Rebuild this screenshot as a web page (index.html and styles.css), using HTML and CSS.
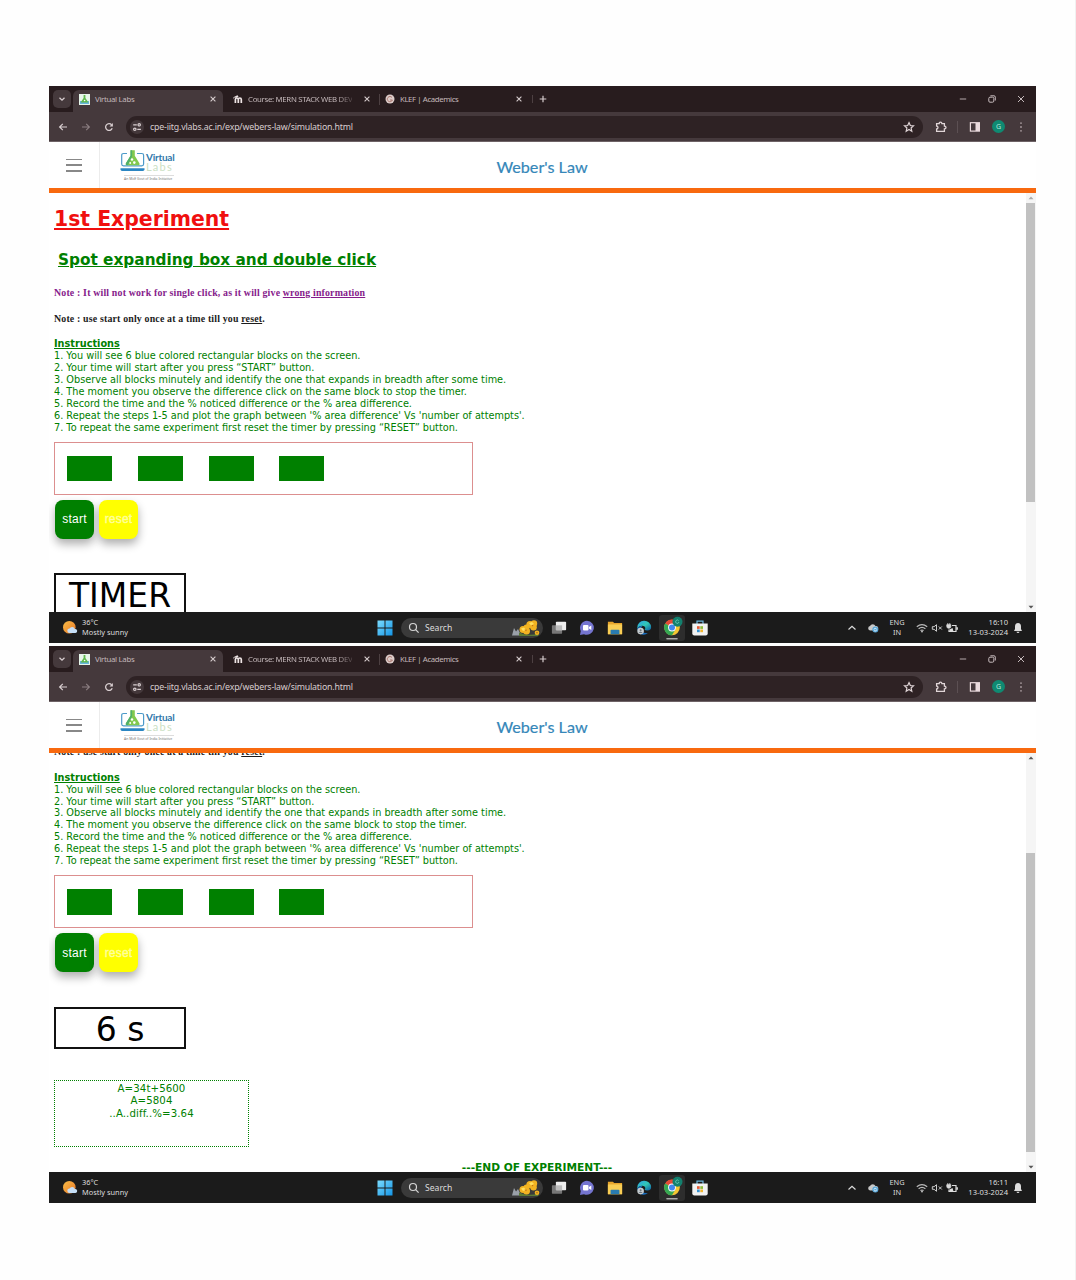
FILE: index.html
```html
<!DOCTYPE html>
<html lang="en">
<head>
<meta charset="utf-8">
<title>Weber's Law - Virtual Labs</title>
<link rel="stylesheet" href="styles.css">
</head>
<body>
<svg class="defs" width="0" height="0" aria-hidden="true">
  <defs>
    <linearGradient id="gwin" x2="1" y2="1"><stop offset="0" stop-color="#7bdcff"/><stop offset="1" stop-color="#1495e6"/></linearGradient>
    <linearGradient id="gsun" x2="1" y2="1"><stop offset="0" stop-color="#f8bd45"/><stop offset="1" stop-color="#e9762a"/></linearGradient>
    <linearGradient id="gedge" x2="1" y2="1"><stop offset="0" stop-color="#2b9fe8"/><stop offset=".5" stop-color="#31c8b6"/><stop offset="1" stop-color="#0c59a4"/></linearGradient>
  </defs>
  <symbol id="chev" viewBox="0 0 8 8"><path d="M1.5 2.8 4 5.2 6.5 2.8" fill="none" stroke="#d8ced0" stroke-width="1.3"/></symbol>
  <symbol id="x" viewBox="0 0 8 8"><path d="M1.6 1.6l4.8 4.8M6.4 1.6 1.6 6.4" stroke="#d6cccd" stroke-width="1.1"/></symbol>
  <symbol id="plus" viewBox="0 0 8 8"><path d="M4 .7v6.6M.7 4h6.6" stroke="#d6cccd" stroke-width="1.2"/></symbol>
  <symbol id="fav" viewBox="0 0 11 11"><rect width="11" height="11" fill="#e6f5ea"/><rect x="1" y="7" width="9" height="3" fill="#68b5dc"/><path d="M4.6 1h1.8v3l3 4.6H1.6l3-4.6z" fill="#5fb84e"/><circle cx="5.6" cy="6.5" r=".8" fill="#fff"/></symbol>
  <symbol id="moodle" viewBox="0 0 10 10"><path d="M2.4 9V5.400Q2.400 4 3.800 4T5.300 5.400V9M5.300 5.400Q5.300 4 6.800 4T8.300 5.400V9" fill="none" stroke="#eee4e4" stroke-width="1.700"/><path d="M.4 3.200 4.400 1.300l1.200 1.100-2 1.300-2.400-.2-.3 2z" fill="#eee4e4"/></symbol>
  <symbol id="klef" viewBox="0 0 10 10"><circle cx="5" cy="5" r="4.500" fill="#ddcdca"/><path d="M7 3.500A2.600 2.600 0 1 0 7.400 6H5" fill="none" stroke="#a8766e" stroke-width="1"/></symbol>
  <symbol id="min" viewBox="0 0 10 10"><path d="M1.8 5h6.400" stroke="#b5a9ab"/></symbol>
  <symbol id="max" viewBox="0 0 10 10"><rect x="1.800" y="3.200" width="5" height="5" rx="1.200" fill="none" stroke="#c5babc"/><path d="M3.400 1.800H7Q8.300 1.800 8.300 3.100v3.400" fill="none" stroke="#c5babc"/></symbol>
  <symbol id="close" viewBox="0 0 10 10"><path d="m2 2 6 6M8 2 2 8" stroke="#c5babc"/></symbol>
  <symbol id="back" viewBox="0 0 10 10"><path d="M9 5H1.800M4.800 1.800 1.600 5l3.200 3.200" fill="none" stroke="#d9cfd1" stroke-width="1.200"/></symbol>
  <symbol id="fwd" viewBox="0 0 10 10"><path d="M1 5h7.200M5.200 1.800 8.400 5 5.200 8.200" fill="none" stroke="#8c7f82" stroke-width="1.100"/></symbol>
  <symbol id="reload" viewBox="0 0 10 10"><path d="M8.200 6.300A3.400 3.400 0 1 1 7.600 2.800" fill="none" stroke="#d9cfd1" stroke-width="1.300"/><path d="M8.900 1v3.400H5.500z" fill="#d9cfd1"/></symbol>
  <symbol id="site" viewBox="0 0 14 14"><circle cx="7" cy="7" r="7" fill="#44383b"/><path d="M6.800 4.800H3.200M7.300 9.300h3.600" stroke="#d9cfd1" stroke-width="1.300"/><circle cx="9.200" cy="4.800" r="1.200" fill="none" stroke="#d9cfd1" stroke-width="1.200"/><circle cx="4.800" cy="9.300" r="1.200" fill="none" stroke="#d9cfd1" stroke-width="1.200"/></symbol>
  <symbol id="star" viewBox="0 0 12 12"><path d="m6 1.600 1.300 2.900 3.200.3L8.100 7l.7 3.200L6 8.500l-2.800 1.700L3.900 7 1.500 4.800l3.200-.3z" fill="none" stroke="#e0d5d7" stroke-width="1.200"/></symbol>
  <symbol id="ext" viewBox="0 0 12 12"><path d="M1.600 2.600h2.600q0-1.500 1.300-1.500t1.400 1.500h2.500v2.600q1.600 0 1.600 1.300T9.400 7.900v2.500H1.600V8Q3 7.800 3 6.500T1.600 5z" fill="none" stroke="#e0d5d7" stroke-width="1.300"/></symbol>
  <symbol id="panel" viewBox="0 0 12 12"><rect x="1.400" y="1.700" width="9" height="8.400" fill="none" stroke="#eadadd" stroke-width="1.200"/><rect x="6.500" y="2" width="4" height="8" fill="#eadadd"/></symbol>
  <symbol id="dots" viewBox="0 0 4 12"><path d="M1.300 1.400h1.400v1.400H1.300zm0 3.900h1.400v1.400H1.300zm0 3.900h1.400v1.400H1.300z" fill="#c6babd"/></symbol>
  <symbol id="laptop" viewBox="0 0 26 22"><path d="M7 3.500H3.500Q1.700 3.500 1.700 5.300V14q0 1.800 1.800 1.800h18.300q1.800 0 1.800-1.800V5.300q0-1.800-1.800-1.800H17" fill="none" stroke="#4c9ac9" stroke-width="1.200"/><path d="M.5 18.200h24v1q0 1.800-1.600 1.800H2Q.5 21 .5 19.200z" fill="#2b86c2"/><path d="M10.500.3h4.300v5.500l4.600 7.500q.7 2-1.400 2H7.300q-2.100 0-1.400-2l4.600-7.500z" fill="#82c94f"/><path d="M10.500.3h1.600v6L7.700 15.300q-2.500 0-1.800-2l4.600-7.500z" fill="#4fb06b"/><circle cx="12" cy="9.500" r="1.200" fill="#fff"/><circle cx="14.300" cy="12.600" r="1.300" fill="#fff"/><circle cx="10.200" cy="13" r=".9" fill="#fff"/></symbol>
  <symbol id="sun" viewBox="0 0 16 16"><circle cx="7.300" cy="7.300" r="6.300" fill="url(#gsun)"/><path d="M7.500 13a2.200 2.200 0 0 1 0-4.400 3 3 0 0 1 5.400.4 2 2 0 0 1 .6 4z" fill="#c5def6"/></symbol>
  <symbol id="win" viewBox="0 0 16 16"><path d="M.5.5h7v7h-7zM8.500.5h7v7h-7zM.5 8.500h7v7h-7zM8.500 8.500h7v7h-7z" fill="url(#gwin)"/></symbol>
  <symbol id="mag" viewBox="0 0 12 12"><circle cx="5" cy="5" r="3.500" fill="none" stroke="#d5d5d5" stroke-width="1.200"/><path d="m7.600 7.600 3 3" stroke="#d5d5d5" stroke-width="1.300"/></symbol>
  <symbol id="flower" viewBox="0 0 30 18"><path d="M1 16.500 3 9l2 3.500L7 10l2 4 4 2.500z" fill="#9aa0a8"/><path d="M8 13.500q8 4 20 1l-1 2.500H8z" fill="#5b7a35"/><g fill="#f2b322"><circle cx="12" cy="10.500" r="3.500"/><circle cx="15.500" cy="8.500" r="3"/><circle cx="15.500" cy="12" r="3.500"/><circle cx="19" cy="5.500" r="3.600"/><circle cx="23" cy="4.500" r="3.200"/><circle cx="22.500" cy="8.300" r="3.300"/><circle cx="26" cy="13.700" r="2.300"/></g><path d="m10 9.500 3-1 2 2.500-3 1zM18 4l3-1 2 2-3 1.500z" fill="#ffdf5e"/><path d="m13.500 10.500 2.500.2-1 1.500zM20.500 6l2 .3-1 1.300z" fill="#c46b12"/><circle cx="26" cy="13.700" r=".8" fill="#a76118"/></symbol>
  <symbol id="tasks" viewBox="0 0 18 18"><rect x="1" y="6" width="11.500" height="9.500" rx=".8" fill="#777"/><rect x="5.500" y="2" width="11.500" height="9.500" rx=".8" fill="#eee"/><path d="M5.500 6h7v5.500h-7z" fill="#bcbcbc"/></symbol>
  <symbol id="chat" viewBox="0 0 16 16"><path d="M8 .8A7 7 0 1 1 5 14.200L1 15l.8-4A7 7 0 0 1 8 .8z" fill="#7474cf"/><rect x="4" y="5" width="5.500" height="5.600" rx="1" fill="#fff"/><path d="m10 7 2.300-1.500v4.600L10 8.600z" fill="#fff"/></symbol>
  <symbol id="folder" viewBox="0 0 18 16"><path d="M1 1h5.500L8.200 2.500H17v12.500H1z" fill="#e7a52c"/><path d="M1 4h16v11H1z" fill="#f9ce55"/><path d="M4 11q0-1 1-1h8q1 0 1 1v4H4z" fill="#297bb1"/></symbol>
  <symbol id="edge" viewBox="0 0 18 16"><path d="M1.500 7.500A7.700 7.300 0 0 1 17 7q.3 3.800-4.300 3.800-2.700 0-3-1 .9-.8.8-2.200Q10 5.500 7 5.500 3 5.500 1.500 9z" fill="url(#gedge)"/><path d="M7.500 5.600Q5.500 7 5.800 10q.8 4 7.500 4Q10 16.500 6 15 1.500 13 1.500 8.500 3.500 5.400 7.500 5.600z" fill="#186dbc"/><circle cx="5.200" cy="11.500" r="3.700" fill="#c6ccd0"/><circle cx="5.200" cy="10.500" r="1.100" fill="#6c7781"/><path d="M3 13.500q2.200-2.300 4.400 0z" fill="#6c7781"/></symbol>
  <symbol id="chrome" viewBox="0 0 26 26"><rect width="26" height="26" rx="3" fill="#2d2d2d"/><circle cx="13" cy="12.500" r="7.800" fill="#f5c633"/><path d="M13 12.500 6.200 8.600A7.800 7.800 0 0 1 19.800 8.600z" fill="#e64a38"/><path d="M6.200 8.600A7.800 7.800 0 0 0 13 20.300l3.400-5.800-3.400-2z" fill="#36a853"/><circle cx="13" cy="12.500" r="3.900" fill="#fff"/><circle cx="13" cy="12.500" r="3" fill="#4388ef"/><circle cx="18.500" cy="6.700" r="5" fill="#13806e"/><path d="M19.700 5.700a1.700 1.700 0 1 0 .2 1.700h-1" fill="none" stroke="#65c6b4" stroke-width=".9"/><path d="M8 23.800h10" stroke="#aaa" stroke-width="1.600" stroke-linecap="round"/></symbol>
  <symbol id="store" viewBox="0 0 16 16"><path d="M5 4V1.200h6V4" fill="none" stroke="#6eb7df" stroke-width="1.200"/><path d="M.3 3.500h15.400v10q0 2-2 2H2.300q-2 0-2-2z" fill="#f2f2f2"/><path d="M5 6.200h2.700v2.700H5z" fill="#e55b36"/><path d="M8.300 6.200H11v2.700H8.300z" fill="#8dba37"/><path d="M5 9.500h2.700v2.700H5z" fill="#3793d1"/><path d="M8.300 9.500H11v2.700H8.300z" fill="#f2b52e"/></symbol>
  <symbol id="up" viewBox="0 0 10 10"><path d="M1.500 6.500 5 3.300l3.500 3.200" fill="none" stroke="#ddd" stroke-width="1.200"/></symbol>
  <symbol id="cloud" viewBox="0 0 12 10"><path d="M3 7.500a2.300 2.300 0 0 1 0-4.500 3 3 0 0 1 5.500 0 2 2 0 0 1 1 4.500z" fill="#c8c8c8"/><circle cx="8.300" cy="6.500" r="3" fill="#5ba8d9"/><path d="M6.900 6.500a1.500 1.500 0 0 1 2.700-.5M9.700 6.700A1.500 1.500 0 0 1 7 7.300" stroke="#fff" fill="none" stroke-width=".8"/></symbol>
  <symbol id="wifi" viewBox="0 0 12 10"><path d="M.8 3.800q5.200-4.300 10.400 0M2.600 5.800q3.400-2.700 6.800 0M4.400 7.600q1.600-1.200 3.200 0" fill="none" stroke="#bbb" stroke-width="1.200"/><circle cx="6" cy="8.500" r=".9" fill="#ccc"/></symbol>
  <symbol id="vol" viewBox="0 0 12 10"><path d="M1.300 3.700h1.800l2.400-2v6.600l-2.400-2H1.300z" fill="none" stroke="#ccc"/><path d="m7.800 3.500 3 3m0-3-3 3" stroke="#ccc"/></symbol>
  <symbol id="batt" viewBox="0 0 12 12"><path d="M6 3.500h4v6H3V7.500M11.300 5.300v2.400" fill="none" stroke="#ddd" stroke-width="1.200"/><path d="M.8 2.700h4v1.800q0 1.800-2 1.800t-2-1.800zM1.800 1v2M3.800 1v2" fill="#ddd" stroke="#ddd" stroke-width=".8"/><path d="M3.500 9.500V7.500l3-1.500 1 3.500z" fill="#ddd"/></symbol>
  <symbol id="bell" viewBox="0 0 10 12"><path d="M5 1q3 .2 3 3.500V7l1 2H1l1-2V4.500Q2 1.200 5 1zM3.500 9.700h3Q6.300 11 5 11T3.500 9.700z" fill="#ddd"/></symbol>
  <symbol id="sup" viewBox="0 0 10 8"><path d="m2.500 5.200 2.500-2.700 2.500 2.700z" fill="currentColor"/></symbol>
</svg>

<main class="page">
<section class="screen">
  <div class="tabs">
    <span class="tabmenu"><svg class="i8"><use href="#chev"/></svg></span>
    <div class="tab active"><svg class="i11"><use href="#fav"/></svg><span class="label">Virtual Labs</span><svg class="i8"><use href="#x"/></svg></div>
    <div class="tab second"><svg class="i10"><use href="#moodle"/></svg><span class="label fade">Course: MERN STACK WEB DEV</span><svg class="i8"><use href="#x"/></svg></div>
    <div class="tab third"><svg class="i10"><use href="#klef"/></svg><span class="label">KLEF | Academics</span><svg class="i8"><use href="#x"/></svg></div>
    <span class="newtab"><svg class="i8"><use href="#plus"/></svg></span>
    <div class="winctl"><svg class="i10"><use href="#min"/></svg><svg class="i10"><use href="#max"/></svg><svg class="i10"><use href="#close"/></svg></div>
  </div>
  <div class="toolbar">
    <div class="nav"><svg class="i10"><use href="#back"/></svg><svg class="i10"><use href="#fwd"/></svg><svg class="i10"><use href="#reload"/></svg></div>
    <div class="url"><svg class="i14"><use href="#site"/></svg><span class="address">cpe-iitg.vlabs.ac.in/exp/webers-law/simulation.html</span><svg class="i12"><use href="#star"/></svg></div>
    <div class="tools"><svg class="i12"><use href="#ext"/></svg><span class="rule"></span><svg class="i12"><use href="#panel"/></svg><span class="avatar">G</span><svg class="dots"><use href="#dots"/></svg></div>
  </div>
  <header class="header">
    <div class="burger"><span></span><span></span><span></span></div>
    <div class="logo">
      <div class="mark"><svg class="laptop"><use href="#laptop"/></svg><div class="brand"><span class="virtual">Virtual</span><span class="labs">Labs</span></div></div>
      <span class="tagline">An MoE Govt of India Initiative</span>
    </div>
    <div class="title">Weber's Law</div>
  </header>
  <div class="view">
    <div class="doc">
      <h1>1st Experiment</h1>
      <h2>Spot expanding box and double click</h2>
      <p class="note purple">Note : It will not work for single click, as it will give <u>wrong information</u></p>
      <p class="note second-note">Note : use start only once at a time till you <u>reset</u>.</p>
      <div class="instructions">
        <p class="heading">Instructions</p>
        <p>1. You will see 6 blue colored rectangular blocks on the screen.</p>
        <p>2. Your time will start after you press “START” button.</p>
        <p>3. Observe all blocks minutely and identify the one that expands in breadth after some time.</p>
        <p>4. The moment you observe the difference click on the same block to stop the timer.</p>
        <p>5. Record the time and the % noticed difference or the % area difference.</p>
        <p>6. Repeat the steps 1-5 and plot the graph between '% area difference' Vs 'number of attempts'.</p>
        <p>7. To repeat the same experiment first reset the timer by pressing “RESET” button.</p>
      </div>
      <div class="blocks"><i></i><i></i><i></i><i></i></div>
      <div class="buttons"><button class="start">start</button><button class="reset">reset</button></div>
      <div class="timer">TIMER</div>
    </div>
    <div class="scrollbar"><svg class="arrow dim"><use href="#sup"/></svg><span class="thumb top"></span><svg class="arrow down"><use href="#sup"/></svg></div>
  </div>
  <footer class="taskbar">
    <svg class="sun"><use href="#sun"/></svg>
    <div class="weather"><span>36°C</span><span>Mostly sunny</span></div>
    <svg class="win"><use href="#win"/></svg>
    <div class="search"><svg class="i12"><use href="#mag"/></svg><span>Search</span><svg class="flower"><use href="#flower"/></svg></div>
    <div class="apps"><svg><use href="#tasks"/></svg><svg><use href="#chat"/></svg><svg><use href="#folder"/></svg><svg><use href="#edge"/></svg><svg class="big"><use href="#chrome"/></svg><svg><use href="#store"/></svg></div>
    <div class="tray">
      <svg class="up"><use href="#up"/></svg><svg class="cloud"><use href="#cloud"/></svg>
      <div class="lang"><span>ENG</span><span>IN</span></div>
      <div class="status"><svg><use href="#wifi"/></svg><svg><use href="#vol"/></svg><svg><use href="#batt"/></svg></div>
      <div class="clock"><span>16:10</span><span>13-03-2024</span></div>
      <svg class="bell"><use href="#bell"/></svg>
    </div>
  </footer>
</section>

<section class="screen">
  <div class="tabs">
    <span class="tabmenu"><svg class="i8"><use href="#chev"/></svg></span>
    <div class="tab active"><svg class="i11"><use href="#fav"/></svg><span class="label">Virtual Labs</span><svg class="i8"><use href="#x"/></svg></div>
    <div class="tab second"><svg class="i10"><use href="#moodle"/></svg><span class="label fade">Course: MERN STACK WEB DEV</span><svg class="i8"><use href="#x"/></svg></div>
    <div class="tab third"><svg class="i10"><use href="#klef"/></svg><span class="label">KLEF | Academics</span><svg class="i8"><use href="#x"/></svg></div>
    <span class="newtab"><svg class="i8"><use href="#plus"/></svg></span>
    <div class="winctl"><svg class="i10"><use href="#min"/></svg><svg class="i10"><use href="#max"/></svg><svg class="i10"><use href="#close"/></svg></div>
  </div>
  <div class="toolbar">
    <div class="nav"><svg class="i10"><use href="#back"/></svg><svg class="i10"><use href="#fwd"/></svg><svg class="i10"><use href="#reload"/></svg></div>
    <div class="url"><svg class="i14"><use href="#site"/></svg><span class="address">cpe-iitg.vlabs.ac.in/exp/webers-law/simulation.html</span><svg class="i12"><use href="#star"/></svg></div>
    <div class="tools"><svg class="i12"><use href="#ext"/></svg><span class="rule"></span><svg class="i12"><use href="#panel"/></svg><span class="avatar">G</span><svg class="dots"><use href="#dots"/></svg></div>
  </div>
  <header class="header">
    <div class="burger"><span></span><span></span><span></span></div>
    <div class="logo">
      <div class="mark"><svg class="laptop"><use href="#laptop"/></svg><div class="brand"><span class="virtual">Virtual</span><span class="labs">Labs</span></div></div>
      <span class="tagline">An MoE Govt of India Initiative</span>
    </div>
    <div class="title">Weber's Law</div>
  </header>
  <div class="view">
    <div class="doc scrolled">
      <p class="note">Note : use start only once at a time till you <u>reset</u>.</p>
      <div class="instructions">
        <p class="heading">Instructions</p>
        <p>1. You will see 6 blue colored rectangular blocks on the screen.</p>
        <p>2. Your time will start after you press “START” button.</p>
        <p>3. Observe all blocks minutely and identify the one that expands in breadth after some time.</p>
        <p>4. The moment you observe the difference click on the same block to stop the timer.</p>
        <p>5. Record the time and the % noticed difference or the % area difference.</p>
        <p>6. Repeat the steps 1-5 and plot the graph between '% area difference' Vs 'number of attempts'.</p>
        <p>7. To repeat the same experiment first reset the timer by pressing “RESET” button.</p>
      </div>
      <div class="blocks"><i></i><i></i><i></i><i></i></div>
      <div class="buttons"><button class="start">start</button><button class="reset">reset</button></div>
      <div class="timer">6 s</div>
      <div class="result"><span>A=34t+5600</span><span>A=5804</span><span>..A..diff..%=3.64</span></div>
      <p class="end">---END OF EXPERIMENT---</p>
    </div>
    <div class="scrollbar"><svg class="arrow"><use href="#sup"/></svg><span class="thumb bottom"></span><svg class="arrow down"><use href="#sup"/></svg></div>
  </div>
  <footer class="taskbar">
    <svg class="sun"><use href="#sun"/></svg>
    <div class="weather"><span>36°C</span><span>Mostly sunny</span></div>
    <svg class="win"><use href="#win"/></svg>
    <div class="search"><svg class="i12"><use href="#mag"/></svg><span>Search</span><svg class="flower"><use href="#flower"/></svg></div>
    <div class="apps"><svg><use href="#tasks"/></svg><svg><use href="#chat"/></svg><svg><use href="#folder"/></svg><svg><use href="#edge"/></svg><svg class="big"><use href="#chrome"/></svg><svg><use href="#store"/></svg></div>
    <div class="tray">
      <svg class="up"><use href="#up"/></svg><svg class="cloud"><use href="#cloud"/></svg>
      <div class="lang"><span>ENG</span><span>IN</span></div>
      <div class="status"><svg><use href="#wifi"/></svg><svg><use href="#vol"/></svg><svg><use href="#batt"/></svg></div>
      <div class="clock"><span>16:11</span><span>13-03-2024</span></div>
      <svg class="bell"><use href="#bell"/></svg>
    </div>
  </footer>
</section>
</main>
</body>
</html>
```

FILE: styles.css
```css
* { box-sizing: border-box; }
body { margin: 0; background: #fefefe; }
p, h1, h2 { margin: 0; }
svg { display: block; flex: none; }
.defs { height: 0; }

.page {
  height: 1280px;
  padding: 86px 0 0 49px;
  display: flex;
  flex-direction: column;
  gap: 3px;
  border-right: 1px solid #f1f1f1;
  overflow: hidden;
}
.screen {
  width: 987px;
  height: 557px;
  display: flex;
  flex-direction: column;
  flex: none;
  background: #fff;
  font-family: "Noto Sans", "Open Sans", sans-serif;
  overflow: hidden;
}
.i8 { width: 8px; height: 8px; }
.i10 { width: 10px; height: 10px; }
.i11 { width: 11px; height: 11px; }
.i12 { width: 12px; height: 12px; }
.i14 { width: 14px; height: 14px; }

/* browser tab strip */
.tabs {
  height: 26px;
  display: flex;
  align-items: center;
  background: #281c1e;
  color: #c4b8ba;
  font-size: 7.8px;
  letter-spacing: -0.3px;
  line-height: 12px;
  white-space: nowrap;
}
.tabmenu {
  width: 18px;
  height: 18px;
  margin-left: 4px;
  display: grid;
  place-items: center;
  background: #45393c;
  border-radius: 5px;
}
.tab { display: flex; align-items: center; height: 26px; }
.tab .label { margin: 0 auto 0 5px; }
.tab.active {
  width: 150px;
  margin: 4px 0 0 2px;
  height: 22px;
  padding: 0 6px 4px;
  background: #45393c;
  border-radius: 6px 6px 0 0;
}
.tab.second { width: 156px; padding: 0 8px 0 10px; }
.tab.third { width: 153px; padding: 0 9px 0 6px; }
.tab.third .label { letter-spacing: -0.4px; }
.tab.third, .newtab {
  background: linear-gradient(#4d4042, #4d4042) left center / 1px 11px no-repeat;
}
.newtab { padding-left: 7px; }
.fade {
  -webkit-mask-image: linear-gradient(90deg, #000 85%, rgba(0, 0, 0, .25));
  mask-image: linear-gradient(90deg, #000 85%, rgba(0, 0, 0, .25));
}
.winctl { margin-left: auto; padding-right: 10px; display: flex; gap: 19px; }

/* address bar */
.toolbar {
  height: 30px;
  display: flex;
  align-items: center;
  background: #45393c;
  border-bottom: 1px solid #6e6366;
}
.nav { width: 77px; padding-left: 9px; display: flex; gap: 13px; }
.url {
  width: 797px;
  height: 22px;
  padding: 0 8px 0 4px;
  display: flex;
  align-items: center;
  background: #2e2224;
  border-radius: 11px;
}
.address { margin: 0 auto 0 6px; font-size: 8.8px; letter-spacing: -0.19px; color: #d8cdcf; white-space: nowrap; }
.tools { margin-left: 12px; display: flex; align-items: center; }
.rule { width: 1px; height: 12px; margin: 0 11px 0 10px; background: #5c5053; }
.avatar {
  width: 13px;
  height: 13px;
  margin: 0 14px 0 11px;
  border-radius: 50%;
  background: #0f8a72;
  color: #b9e6dc;
  font-size: 7px;
  line-height: 13px;
  text-align: center;
}
.dots { width: 4px; height: 12px; }

/* lab site header */
.header {
  height: 51px;
  display: grid;
  grid-template-columns: 51px 130px 624px 1fr;
  grid-template-rows: 46px;
  border-bottom: 5px solid #f8690f;
}
.burger {
  padding: 16.5px 0 0 17px;
  display: flex;
  flex-direction: column;
  gap: 4px;
  border-right: 1px solid #ececec;
}
.burger span { width: 16px; height: 1.7px; background: #888; }
.logo { padding: 8px 0 0 20px; display: flex; flex-direction: column; }
.mark { display: flex; height: 22px; }
.laptop { width: 26px; height: 22px; }
.brand { padding-top: 2px; display: flex; flex-direction: column; font-family: "Lato", sans-serif; line-height: 10px; }
.virtual { font-size: 10px; font-weight: 700; color: #3078ab; letter-spacing: -0.25px; }
.labs { font-size: 11px; color: #cbdfc4; letter-spacing: 1.2px; }
.tagline { width: 50px; margin: 3px 0 0 4px; border-top: 1px solid #ddd; font-size: 3.4px; line-height: 5px; color: #777; white-space: nowrap; }
.title {
  text-align: center;
  font-family: "Lato", sans-serif;
  font-size: 16.2px;
  line-height: 50px;
  color: #3587b9;
  -webkit-text-stroke: .2px #3587b9;
}

/* lab page */
.view { height: 419px; display: flex; overflow: hidden; }
.doc {
  width: 977px;
  padding: 14.3px 0 0 5px;
  font-family: "DejaVu Sans", Verdana, sans-serif;
  color: green;
  white-space: nowrap;
}
.doc.scrolled { padding-top: 0; margin-top: -7px; }
h1 { font-size: 20.4px; line-height: 25px; color: #f00f0f; text-decoration: underline; }
h2 { margin: 18px 0 0 4px; font-size: 15.3px; line-height: 20px; text-decoration: underline; }
.note { font: bold 9.9px/12px "Liberation Serif", serif; letter-spacing: .165px; color: #1c1c1c; }
.purple { margin-top: 16.5px; color: #861b8b; }
.second-note { margin-top: 13.8px; }
.instructions { margin-top: 13.7px; font-size: 9.72px; line-height: 11.9px; }
.heading { font-weight: bold; text-decoration: underline; }
.blocks {
  width: 419px;
  height: 53px;
  margin-top: 8.4px;
  padding: 13px 12px;
  display: flex;
  gap: 25.8px;
  border: 1px solid #dc8f8f;
}
.blocks i { width: 45px; height: 25.5px; background: green; }
.buttons { margin: 5px 0 0 1px; display: flex; gap: 5px; }
button {
  width: 39px;
  height: 39px;
  padding: 0;
  border: 0;
  border-radius: 8px;
  font: 12px "Liberation Sans", sans-serif;
  letter-spacing: .2px;
  color: #fff;
  box-shadow: 0 5px 10px rgba(0, 0, 0, .32);
}
.start { background: green; }
.reset { background: #ff0; color: #ffff9c; -webkit-text-stroke: .4px #ffff9c; }
.timer {
  width: 132px;
  height: 42px;
  margin-top: 34.5px;
  border: 2px solid #111;
  font-size: 33px;
  line-height: 42px;
  text-align: center;
  color: #000;
}
.result {
  width: 195px;
  height: 66.5px;
  margin-top: 31.5px;
  padding-top: 1.5px;
  display: flex;
  flex-direction: column;
  border: 1px dotted green;
  font-size: 10.2px;
  line-height: 12.5px;
  letter-spacing: .1px;
  text-align: center;
}
.end { margin-top: 14.7px; padding-right: 6px; font-size: 10.65px; font-weight: bold; line-height: 12px; text-align: center; }
.scrollbar { width: 10px; display: flex; flex-direction: column; background: #f5f5f5; color: #555; }
.arrow { width: 10px; height: 10px; }
.dim { color: #aaa; }
.down { margin-top: auto; transform: rotate(180deg); }
.thumb { width: 9px; height: 299px; background: #c1c1c1; }
.top { margin-top: 0; }
.bottom { margin-top: 90px; }

/* taskbar */
.taskbar {
  height: 31px;
  display: flex;
  align-items: center;
  background: #1b1b1b;
  color: #ddd;
  font-size: 7.4px;
  line-height: 10px;
  white-space: nowrap;
}
.weather, .lang, .clock { display: flex; flex-direction: column; padding-bottom: 2px; }
.sun { width: 16px; height: 16px; margin-left: 13px; }
.weather { width: 296px; padding-left: 4px; }
.win { width: 16px; height: 16px; margin-left: 3px; }
.search {
  width: 142px;
  height: 20px;
  margin-left: 8px;
  padding: 0 2px 0 7px;
  display: flex;
  align-items: center;
  background: #3a3a3a;
  border-radius: 10px;
  font-size: 8.6px;
}
.search span { margin: 0 auto 0 5px; }
.flower { width: 30px; height: 18px; }
.apps { margin-left: 8px; display: flex; align-items: center; gap: 12.2px; }
.apps svg { width: 16px; height: 16px; }
.apps .big { width: 26px; height: 26px; margin: 0 -5px; }
.tray { margin-left: auto; padding-right: 13px; display: flex; align-items: center; }
.up { width: 10px; height: 10px; }
.cloud { width: 12px; height: 10px; margin-left: 10px; }
.lang { width: 22px; margin-left: 7px; text-align: center; }
.status { margin-left: 8px; display: flex; gap: 3px; }
.status svg { width: 12px; height: 12px; }
.clock { width: 50px; text-align: right; font-size: 7.6px; }
.bell { width: 10px; height: 12px; margin-left: 5px; }
```
